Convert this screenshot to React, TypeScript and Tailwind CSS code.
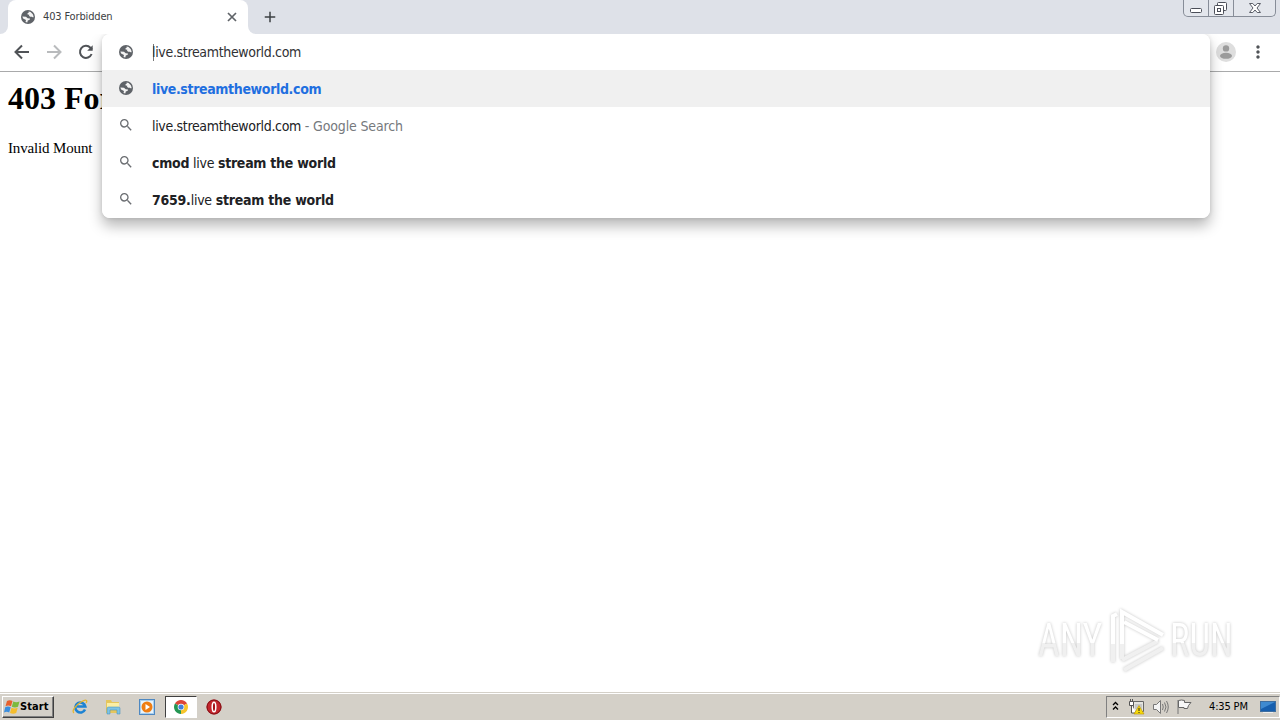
import { MdAdd, MdMoreVert, MdSearch } from "react-icons/md"

function Globe({ className = "" }: { className?: string }) {
    return (
        <svg className={className} width="14" height="14" viewBox="0 0 14 14">
            <circle cx="7" cy="7" r="7" fill="#5f6368" />
            <path d="M7.6 1.5 9.6 2 11.8 4.2 12.6 6.5 12.2 7.6 10.8 6.8H9.2L8 5.8 8.3 4.8 6.6 4.5 6.5 3.2 7.7 2.7Z" fill="#f4f4f4" />
            <path d="M1.4 6.5 5 6.7 6.7 8.2 9 8.5 8.7 9.8 6.8 10.5 6.3 12.5 4.5 12 5 10 2.1 8.5Z" fill="#f4f4f4" />
        </svg>
    )
}

function TabStrip() {
    return (
        <div className="flex h-[34px] shrink-0 items-stretch bg-[#dee1e8]">
            <div className="w-2 bg-white">
                <div className="h-full rounded-br-lg bg-[#dee1e8]"></div>
            </div>
            <div className="flex w-60 items-center rounded-t-lg bg-white pl-[13px] pr-[9px]">
                <Globe />
                <div className="ml-2 flex-1 whitespace-nowrap pt-px text-[11px] tracking-[-0.15px] text-[#3c4043]">403 Forbidden</div>
                <svg width="14" height="14" viewBox="0 0 14 14" fill="none" stroke="#5f6368" strokeWidth="1.7">
                    <path d="m3 3 8 8M11 3l-8 8" />
                </svg>
            </div>
            <div className="w-2 bg-white">
                <div className="h-full rounded-bl-lg bg-[#dee1e8]"></div>
            </div>
            <div className="flex items-center pl-[5px]">
                <MdAdd size={18} color="#3c4043" />
            </div>
            {/* window buttons */}
            <div className="ml-auto mr-1 flex h-[17px] w-[93px] rounded-b-[5px] border border-t-0 border-[#878d98] bg-[#e3e6ec]">
                <div className="flex w-[25px] justify-center border-r border-[#878d98]">
                    <svg width="24" height="16" viewBox="0 0 24 16">
                        <rect x="6.5" y="8.5" width="11" height="4" rx="1" fill="#fff" stroke="#4b4e58" />
                    </svg>
                </div>
                <div className="flex w-[25px] justify-center border-r border-[#878d98]">
                    <svg width="24" height="16" viewBox="0 0 24 16" fill="#fff" stroke="#4b4e58">
                        <rect x="8.5" y="2.5" width="9" height="8" rx="1" />
                        <rect x="5.5" y="5.5" width="9" height="9" rx="1" />
                        <rect x="8.5" y="8.5" width="3" height="3" />
                    </svg>
                </div>
                <div className="flex flex-1 justify-center">
                    <svg width="14" height="16" viewBox="0 0 14 16">
                        <path d="M1.5 3.5h3.3L7 6l2.2-2.5h3.3L9 8l3.5 4.5H9.2L7 10l-2.2 2.5H1.5L5 8Z" fill="#fff" stroke="#5a5e68" />
                    </svg>
                </div>
            </div>
        </div>
    )
}

function Toolbar() {
    return (
        <div className="flex h-[38px] shrink-0 items-center border-b border-[#a9aaab] bg-white pb-px pl-3 pr-3">
            <svg width="20" height="20" viewBox="0 0 20 20" fill="none" stroke="#505357" strokeWidth="2">
                <path d="M17 10H4.500M10 3.500 3.500 10l6.500 6.500" />
            </svg>
            <svg className="ml-3" width="20" height="20" viewBox="0 0 20 20" fill="none" stroke="#b9bbbd" strokeWidth="2">
                <path d="M3 10h12.500M10 3.500l6.500 6.500-6.500 6.500" />
            </svg>
            <svg className="ml-3" width="20" height="20" viewBox="0 0 20 20" fill="none" stroke="#505357" strokeWidth="2">
                <path d="M15.600 12a6 6 0 1 1-1.200-6.200L16 7.500" />
                <path d="M16.700 3.300v5.500h-5.500Z" fill="#505357" stroke="none" />
            </svg>
            <svg className="ml-auto" width="20" height="20" viewBox="0 0 20 20">
                <circle cx="10" cy="10" r="10" fill="#dedede" />
                <circle cx="10" cy="6.4" r="3.2" fill="#9b9b9b" />
                <ellipse cx="10" cy="13.8" rx="6" ry="3" fill="#9b9b9b" />
            </svg>
            <MdMoreVert className="ml-3" size={20} color="#505357" />
        </div>
    )
}

function Omnibox() {
    return (
        <div className="absolute left-[102px] top-[34px] w-[1108px] overflow-hidden rounded-lg bg-white text-[14px] whitespace-pre text-[#202124]">
            <div className="flex h-9 items-center pl-[17px]">
                <Globe />
                <div className="ml-5 h-[17px] w-px bg-[#777]"></div>
                <div className="-ml-0.5 tracking-[-0.33px] text-[#303134]">live.streamtheworld.com</div>
            </div>
            <div className="flex h-[37px] items-center bg-[#f0f0f0] pl-[17px]">
                <Globe className="mb-px" />
                <div className="ml-[19px] pt-px font-bold tracking-[-0.36px] text-[#1f6fe0]">live.streamtheworld.com</div>
            </div>
            <div className="flex h-[37px] items-center pl-4">
                <MdSearch className="mb-0.5" size={16} color="#6b6e72" />
                <div className="ml-[18px] pt-px tracking-[-0.33px]">live.streamtheworld.com<span className="tracking-[-0.15px] text-[#76797d]"> - Google Search</span></div>
            </div>
            <div className="flex h-[37px] items-center pl-4">
                <MdSearch className="mb-0.5" size={16} color="#6b6e72" />
                <div className="ml-[18px] pt-px tracking-[-0.26px]"><b>cmod</b> live <b>stream the world</b></div>
            </div>
            <div className="flex h-[37px] items-center pl-4">
                <MdSearch className="mb-0.5" size={16} color="#6b6e72" />
                <div className="ml-[18px] pt-px tracking-[-0.24px]"><b>7659.</b>live <b>stream the world</b></div>
            </div>
        </div>
    )
}

function Watermark() {
    return (
        <div className="absolute left-[1038px] top-[606px] flex h-[68px] items-center font-['Roboto'] text-[47px] [filter:drop-shadow(0_0_1.5px_#c4c4c4)]">
            <div className="w-[68px]">
                <div className="w-max origin-left scale-x-[0.8] bg-linear-to-b from-white from-55% to-[#f0f0f0] to-55% bg-clip-text text-transparent">ANY</div>
            </div>
            <svg width="62" height="68" viewBox="0 0 62 68" fill="none" strokeWidth="4">
                <path d="M7 38v18M16 38v15M18 64l39-22M16 54l36-19" stroke="#f0f0f0" />
                <path d="M7 38V10l4-2M16 38V6l41 23M18 16l34 18" stroke="#fff" />
            </svg>
            <div className="ml-0.5">
                <div className="w-max origin-left scale-x-[0.78] bg-linear-to-b from-white from-55% to-[#f0f0f0] to-55% bg-clip-text text-transparent">RUN</div>
            </div>
        </div>
    )
}

function WindowsFlag() {
    return (
        <svg width="17" height="16" viewBox="0 0 17 16">
            <path d="M3 2c2-1.3 4-.9 5.5 0L7 7.3C5.3 6.3 3.5 6.2 1.5 7.2Z" fill="#e8602c" />
            <path d="M9.3 2.5c2 1 4 1 6.2 0L14 7.7c-2 1-4 1-6.2 0Z" fill="#7cba3d" />
            <path d="M1.2 8.2c2-1.2 4-.9 5.5 0L5.2 13.5c-1.7-1-3.5-1-5.2 0Z" fill="#3b8ede" />
            <path d="M7.5 8.7c2 1 4 1 6.2 0l-1.5 5.2c-2 1-4 1-6.2 0Z" fill="#f5bd2c" />
        </svg>
    )
}

function Taskbar() {
    return (
        <div className="flex h-[27px] shrink-0 items-center border-t border-white bg-[#d4d0c8]">
            <div className="ml-0.5 flex h-[22px] w-[52px] items-center border border-[#fff] border-b-[#404040] border-r-[#404040] pl-px text-[11px] font-bold text-black shadow-[inset_-1px_-1px_#808080]">
                <WindowsFlag />
                <span className="-ml-px pt-px tracking-[0.1px]">Start</span>
            </div>
            {/* internet explorer */}
            <svg className="ml-[18px]" width="16" height="16" viewBox="0 0 16 16" fill="none">
                <path d="M13 10.5a5 5 0 1 1 .3-3H5" stroke="#1d83d3" strokeWidth="2.6" />
                <path d="M2 14C-1 12 4 6 9 3s7-2 5 1" stroke="#e5b52b" strokeWidth="1.3" />
            </svg>
            {/* explorer folder */}
            <svg className="ml-[17px]" width="16" height="16" viewBox="0 0 16 16">
                <path d="M1 1h5l1 2h7v11H1Z" fill="#e5c65d" />
                <path d="M2 4h12v5H2Z" fill="#fbeea4" />
                <path d="M2 15V9.5Q2 8 3.5 8h10Q15 8 15 9.5V15h-3v-4H5v4Z" fill="#7fc3e4" stroke="#398bb8" strokeWidth=".5" />
            </svg>
            {/* media player */}
            <svg className="ml-[18px]" width="16" height="16" viewBox="0 0 16 16">
                <rect x=".5" y=".5" width="15" height="15" fill="#a9d0ef" stroke="#4e88c1" />
                <rect x="2" y="2" width="12" height="12" fill="#e8f4fc" />
                <circle cx="8" cy="8" r="5.5" fill="#ef7e13" />
                <path d="M6.5 5v6l4.5-3Z" fill="#fff" />
            </svg>
            {/* chrome */}
            <div className="ml-[10px] flex h-[22px] w-8 items-center justify-center border border-[#404040] border-b-white border-r-white bg-white">
                <svg width="14" height="14" viewBox="0 0 14 14">
                    <path d="M7 7 .94 3.5A7 7 0 0 1 13.06 3.5Z" fill="#dc4538" />
                    <path d="M7 7 .94 3.5A7 7 0 0 0 7 14Z" fill="#249653" />
                    <path d="M7 7 13.06 3.5A7 7 0 0 1 7 14Z" fill="#f7c52c" />
                    <circle cx="7" cy="7" r="3.3" fill="#fff" />
                    <circle cx="7" cy="7" r="2.6" fill="#417fdb" />
                </svg>
            </div>
            {/* opera */}
            <svg className="ml-[9px]" width="16" height="16" viewBox="0 0 16 16">
                <circle cx="8" cy="8" r="7.5" fill="#c3252c" />
                <circle cx="8" cy="8" r="7" fill="none" stroke="#7f1015" />
                <ellipse cx="8" cy="8" rx="1.8" ry="4.8" fill="#a71118" stroke="#fff" strokeWidth="1.5" />
            </svg>
            {/* tray */}
            <div className="ml-auto flex h-[22px] w-[174px] items-center border border-[#808080] border-b-white border-r-white text-[11px] text-black">
                <svg className="mb-0.5 ml-[5px]" width="7" height="10" viewBox="0 0 7 10" fill="none" stroke="#000" strokeWidth="1.3">
                    <path d="m1 4 2.5-2.5L6 4M1 8.5 3.5 6 6 8.5" />
                </svg>
                <svg className="ml-[9px]" width="17" height="16" viewBox="0 0 17 16">
                    <path d="M5.5 2.5h10v10h-10Z" fill="#e4e4df" stroke="#666" />
                    <path d="M7 5h7v5H7Z" fill="#c6c8c8" />
                    <path d="M1.5 2.5h4v4h-4ZM2.5 0v3M4.5 0v3M3.5 6v8h5" fill="#fff" stroke="#555" />
                    <path d="M11 6.5 16 15H6Z" fill="#f5d90a" stroke="#b89000" strokeWidth=".6" />
                    <path d="M11 9v3M11 13v1" stroke="#222" />
                </svg>
                <svg className="ml-[7px]" width="17" height="16" viewBox="0 0 17 16" fill="none" stroke="#777">
                    <path d="M1.5 5.5h3l4-4v13l-4-4h-3Z" fill="#f4f4f4" />
                    <path d="M10.5 5q1.5 3 0 6M12.5 3.5q3 4.5 0 9M14.5 2q3.5 6 0 12" />
                </svg>
                <svg className="ml-[7px]" width="17" height="16" viewBox="0 0 17 16">
                    <path d="M2 1v14" stroke="#777" />
                    <path d="M2.5 1.5q3-1 6 0v2h6.5L12.5 6.5l-1 3H8V8.5H2.5Z" fill="#f7f7f7" stroke="#666" />
                </svg>
                <div className="ml-4 w-[42px] whitespace-nowrap pt-px tracking-[-0.15px]">4:35 PM</div>
                <svg className="ml-[9px]" width="17" height="14" viewBox="0 0 17 14">
                    <rect x=".5" y="1.5" width="15" height="10" fill="#175fae" stroke="#3f6e9f" />
                    <path d="M1 2h14L1 9Z" fill="#3f8ad0" />
                    <path d="M3 12.5h10" stroke="#eee" />
                </svg>
            </div>
        </div>
    )
}

export default function App() {
    return (
        <div className="relative flex h-[720px] w-[1280px] flex-col overflow-hidden bg-white font-['DejaVu_Sans_Condensed','DejaVu_Sans',sans-serif] [font-stretch:condensed]">
            <TabStrip />
            <Toolbar />
            <div className="flex-1 overflow-hidden pl-2 font-['Liberation_Serif',serif] text-black">
                <h1 className="mt-2 text-[32px] leading-9 font-bold">403 For</h1>
                <p className="mt-[22px] text-[15px] leading-[20px] tracking-[-0.15px]">Invalid Mount</p>
            </div>
            <div className="h-px shrink-0 bg-[#d4d0c8]"></div>
            <Taskbar />
            <div className="absolute left-[102px] top-[34px] h-[184px] w-[1108px] rounded-lg shadow-[0_8px_14px_rgba(0,0,0,0.28),0_0_4px_rgba(0,0,0,0.12)] [clip-path:inset(0_-24px_-36px_-24px)]"></div>
            <Omnibox />
            <Watermark />
        </div>
    )
}
